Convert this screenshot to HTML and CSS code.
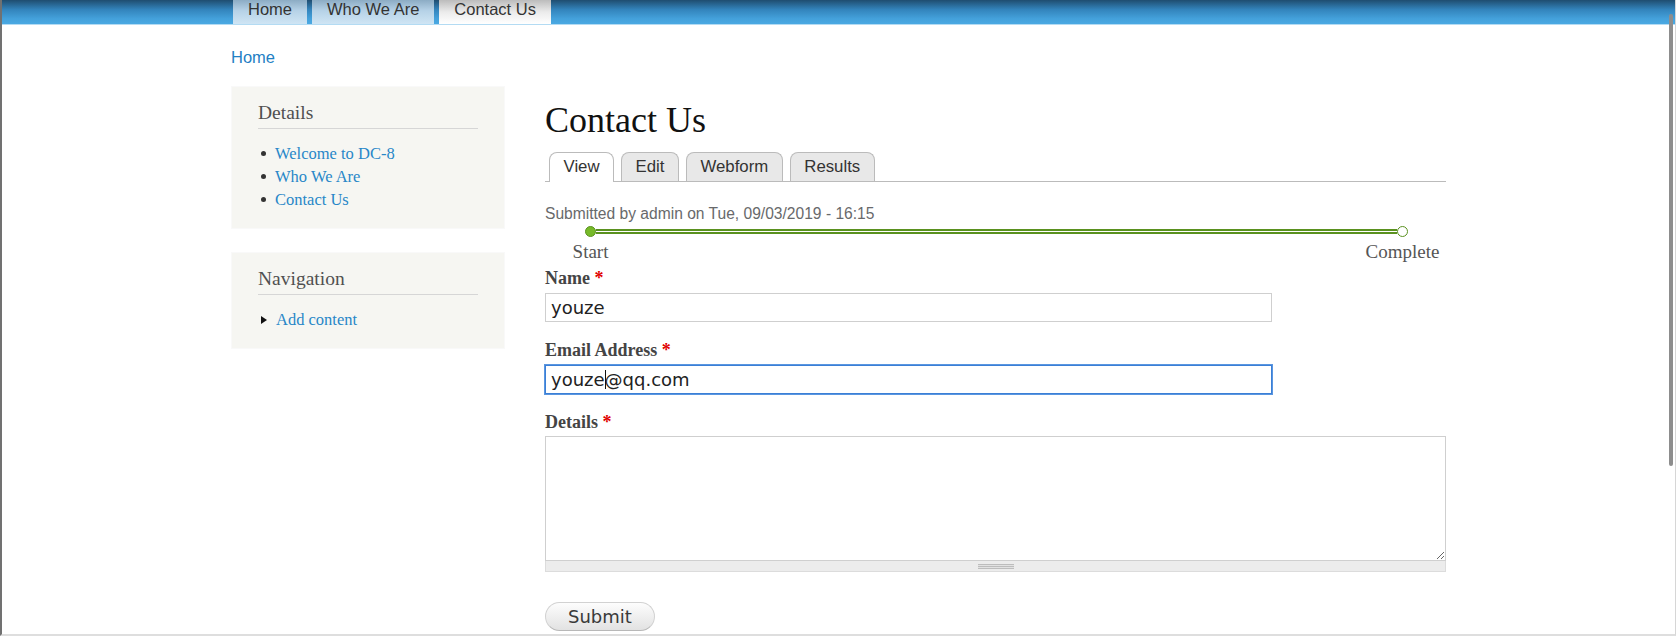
FILE: index.html
```html
<!DOCTYPE html>
<html lang="en">
<head>
<meta charset="utf-8">
<title>Contact Us | DC-8</title>
<link rel="stylesheet" href="styles.css">
</head>
<body>
<div class="window">
  <header class="site-header">
    <nav class="header-inner">
      <a href="#" class="menu-tab">Home</a>
      <a href="#" class="menu-tab">Who We Are</a>
      <a href="#" class="menu-tab active">Contact Us</a>
    </nav>
  </header>

  <div class="container">
    <div class="breadcrumb"><a href="#">Home</a></div>

    <div class="layout">
      <aside class="sidebar">
        <section class="block">
          <h2>Details</h2>
          <ul class="menu bullets">
            <li><a href="#">Welcome to DC-8</a></li>
            <li><a href="#">Who We Are</a></li>
            <li><a href="#">Contact Us</a></li>
          </ul>
        </section>
        <section class="block">
          <h2>Navigation</h2>
          <ul class="menu arrows">
            <li><a href="#">Add content</a></li>
          </ul>
        </section>
      </aside>

      <main class="main">
        <h1 class="title">Contact Us</h1>
        <ul class="tabs">
          <li><a href="#" class="tab active">View</a></li>
          <li><a href="#" class="tab">Edit</a></li>
          <li><a href="#" class="tab">Webform</a></li>
          <li><a href="#" class="tab">Results</a></li>
        </ul>

        <div class="submitted">Submitted by admin on Tue, 09/03/2019 - 16:15</div>

        <div class="progressbar">
          <div class="step">
            <span class="dot done"></span>
            <span class="step-label">Start</span>
          </div>
          <div class="bar"></div>
          <div class="step">
            <span class="dot"></span>
            <span class="step-label">Complete</span>
          </div>
        </div>

        <form class="webform" onsubmit="return false">
          <div class="form-item first">
            <label for="name">Name <span class="req">*</span></label>
            <input id="name" class="form-text" type="text" value="youze">
          </div>
          <div class="form-item">
            <label for="email">Email Address <span class="req">*</span></label>
            <div class="field">
              <input id="email" class="form-text focused" type="email" value="youze@qq.com">
              <span class="caret"></span>
            </div>
          </div>
          <div class="form-item textarea-item">
            <label for="details">Details <span class="req">*</span></label>
            <textarea id="details" class="form-textarea"></textarea>
            <div class="grippie"></div>
          </div>
          <button class="submit" type="submit">Submit</button>
        </form>
      </main>
    </div>
  </div>

  <div class="scrollbar"></div>
</div>
</body>
</html>
```

FILE: styles.css
```css
html, body {
  margin: 0;
  padding: 0;
  background: #fff;
  overflow: hidden;
}

body {
  font-family: "Liberation Serif", "Times New Roman", serif;
}

.window {
  position: relative;
  width: 1676px;
  height: 636px;
  box-sizing: border-box;
  border-left: 2px solid #717171;
  border-right: 1px solid #d6d6d6;
  border-bottom: 2px solid #dedede;
  overflow: hidden;
}

/* ---------- header ---------- */
.site-header {
  height: 24px;
  border-bottom: 1px solid #b3dbf3;
  background: linear-gradient(#1f4d70, #3384bc 40%, #44a1db 78%, #4aa9e3);
}

.header-inner {
  width: 1215px;
  margin: 0 auto;
  padding-left: 2px;
  box-sizing: border-box;
  display: flex;
  gap: 5px;
  height: 24px;
}

.menu-tab {
  display: block;
  height: 24px;
  box-sizing: border-box;
  padding: 1px 15px 0;
  font: 16.5px/16px "Liberation Sans", Arial, sans-serif;
  color: #333;
  text-decoration: none;
  background: linear-gradient(#8cacc4, #b6d2e7 45%, #cfe5f4);
}

.menu-tab.active {
  background: linear-gradient(#bcbcbc, #ebebeb 50%, #fff);
}

/* ---------- container ---------- */
.container {
  width: 1215px;
  margin: 0 auto;
}

.breadcrumb {
  margin-top: 21px;
  font: 16.5px/22px "Liberation Sans", Arial, sans-serif;
}

.breadcrumb a {
  color: #1f80c4;
  text-decoration: none;
}

.layout {
  display: grid;
  grid-template-columns: 274px 901px;
  column-gap: 40px;
  margin-top: 18px;
  align-items: start;
}

/* ---------- sidebar ---------- */
.block {
  background: #f6f6f2;
  border: 1px solid #f9f9f9;
  padding: 14px 26px 17px;
  margin-bottom: 23px;
}

.block h2 {
  margin: 0;
  padding-bottom: 3px;
  border-bottom: 1px solid #d6d6d6;
  font: normal 19.5px/24px "Liberation Serif", "Times New Roman", serif;
  color: #505050;
}

.menu {
  list-style: none;
  margin: 13px 0 0;
  padding: 0;
}

.menu li {
  display: flex;
  align-items: center;
  font: 16.5px/23px "Liberation Serif", "Times New Roman", serif;
}

.menu a {
  color: #2887c8;
  text-decoration: none;
}

.bullets li::before {
  content: "";
  width: 5px;
  height: 5px;
  border-radius: 50%;
  background: #333;
  margin: 0 9px 0 3px;
  flex: none;
}

.arrows li::before {
  content: "";
  width: 0;
  height: 0;
  border-left: 6px solid #111;
  border-top: 4px solid transparent;
  border-bottom: 4px solid transparent;
  margin: 0 9px 0 3px;
  flex: none;
}

/* ---------- main ---------- */
.title {
  margin: 12px 0 0;
  font: normal 36px/44px "Liberation Serif", "Times New Roman", serif;
  color: #111;
}

.tabs {
  display: flex;
  align-items: flex-end;
  list-style: none;
  margin: 10px 0 0;
  padding: 0 0 0 4px;
  border-bottom: 1px solid #bbb;
  height: 29px;
}

.tab {
  display: block;
  margin-right: 7px;
  padding: 0 13.5px;
  border: 1px solid #bbb;
  border-bottom: 0;
  border-radius: 8px 8px 0 0;
  background: #e8e8e8;
  font: 16.8px/28px "Liberation Sans", Arial, sans-serif;
  color: #333;
  text-decoration: none;
}

.tab.active {
  background: #fff;
  padding-bottom: 1px;
  margin-bottom: -1px;
}

.submitted {
  margin-top: 22px;
  font: 15.6px/20px "Liberation Sans", Arial, sans-serif;
  color: #68696b;
}

/* progress bar */
.progressbar {
  display: flex;
  align-items: flex-start;
  margin-top: 2px;
  padding: 0 38px 0 40px;
}

.step {
  width: 11px;
  flex: none;
  display: flex;
  flex-direction: column;
  align-items: center;
}

.dot {
  width: 11px;
  height: 11px;
  box-sizing: border-box;
  border-radius: 50%;
  border: 1px solid #5a911f;
  background: #fff;
  flex: none;
}

.dot.done {
  background: #77ba29;
  border-color: #5b9320;
}

.bar {
  flex: 1;
  height: 1px;
  margin-top: 3px;
  border-top: 2px solid #5a911f;
  border-bottom: 2px solid #5a911f;
  background: #fff;
}

.step-label {
  margin-top: 4px;
  white-space: nowrap;
  font: 19px/22px "Liberation Serif", "Times New Roman", serif;
  color: #555;
}

/* form */
.webform {
  margin: 0;
}

.form-item {
  margin-top: 17px;
}

.form-item.first {
  margin-top: 4px;
}

.form-item label {
  display: block;
  margin-bottom: 4px;
  font: bold 18px/22px "Liberation Serif", "Times New Roman", serif;
  color: #444;
}

.textarea-item label {
  margin-bottom: 3px;
}

.req {
  color: #e00000;
}

.field {
  position: relative;
  width: fit-content;
}

.form-text {
  display: block;
  width: 727px;
  height: 29px;
  box-sizing: border-box;
  margin: 0;
  padding: 0 5px;
  border: 1px solid #cfcfcf;
  border-radius: 0;
  font: 18px "DejaVu Sans", Verdana, sans-serif;
  color: #222;
  background: #fff;
  outline: none;
}

.form-text.focused {
  border-color: #3b7fd6;
  box-shadow: 0 0 0 1px #5a96e0;
}

.caret {
  position: absolute;
  left: 60px;
  top: 5px;
  width: 1px;
  height: 19px;
  background: #111;
}

.form-textarea {
  display: block;
  width: 901px;
  height: 125px;
  box-sizing: border-box;
  margin: 0;
  border: 1px solid #cfcfcf;
  border-radius: 0;
  resize: vertical;
  font: 18px "DejaVu Sans", Verdana, sans-serif;
  background: #fff;
}

.grippie {
  height: 11px;
  box-sizing: border-box;
  border: 1px solid #dcdcdc;
  border-top: 0;
  background: #ececec;
  display: flex;
  justify-content: center;
  align-items: center;
}

.grippie::before {
  content: "";
  width: 36px;
  height: 5px;
  background: repeating-linear-gradient(#bdbdbd 0 1px, #e2e2e2 1px 2px);
}

.submit {
  display: block;
  margin-top: 30px;
  height: 29px;
  padding: 0 22px;
  border: 1px solid #d2d2d2;
  border-bottom-color: #b8b8b8;
  border-radius: 15px;
  background: linear-gradient(#fdfdfd, #e2e2e2);
  font: 18px/1 "DejaVu Sans", Verdana, sans-serif;
  color: #3a3a3a;
}

/* overlay scrollbar thumb */
.scrollbar {
  position: absolute;
  right: 2px;
  top: 14px;
  width: 4px;
  height: 452px;
  border-radius: 2px;
  background: #8d8d8d;
}
```
